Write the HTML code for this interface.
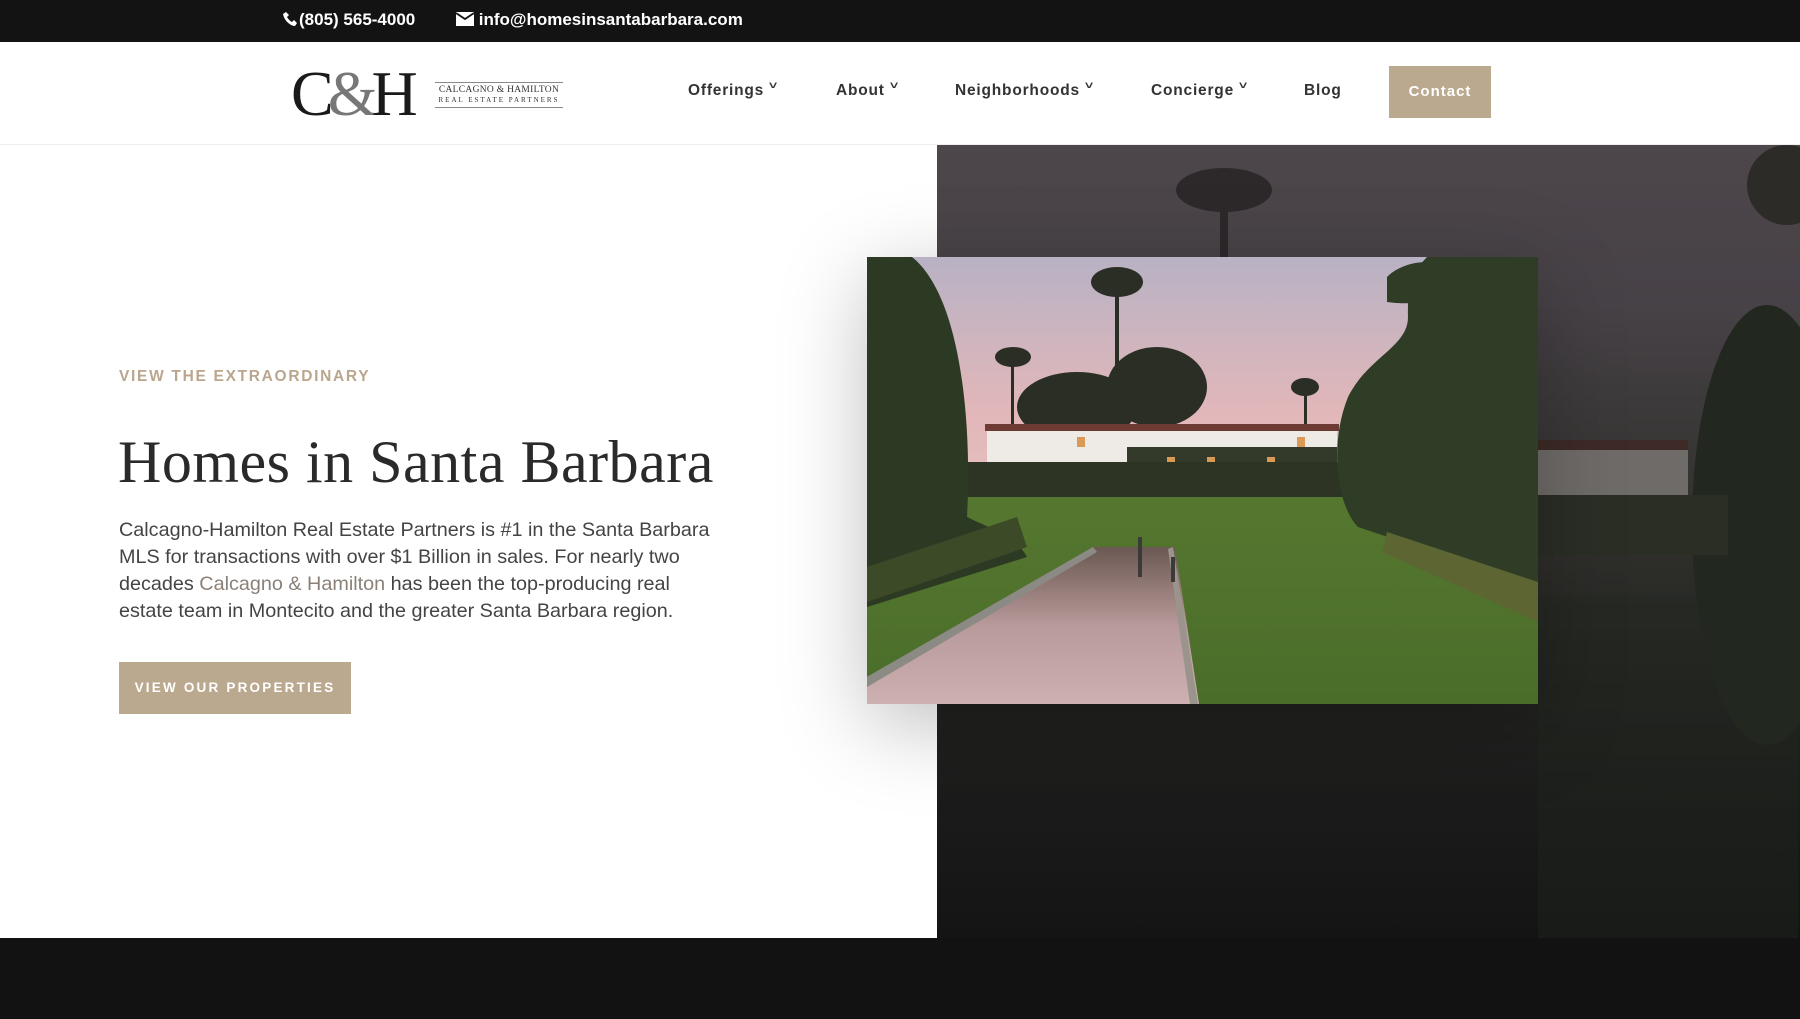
<!DOCTYPE html>
<html><head><meta charset="utf-8"><style>
*{margin:0;padding:0;box-sizing:border-box}
body{width:1800px;height:1019px;overflow:hidden;background:#fff;font-family:"Liberation Sans",sans-serif;position:relative}
.top{position:absolute;left:0;top:0;width:1800px;height:42px;background:#131313;color:#fff;font-weight:bold;font-size:17px}
.top span{position:absolute;top:10px}
.hdr{position:absolute;left:0;top:42px;width:1800px;height:103px;background:#fff;border-bottom:1px solid #eee}
.nav{position:absolute;top:40px;font-size:15.5px;font-weight:bold;color:#333;letter-spacing:.8px}
.nav i{font-style:normal;font-size:11px;position:relative;top:-6px;left:6px;display:inline-block;transform:scaleX(1.3)}
.contact{position:absolute;left:1389px;top:24px;width:102px;height:52px;background:#bba98f;color:#fff;font-size:15px;font-weight:bold;letter-spacing:1px;text-align:center;line-height:52px}
.left{position:absolute;left:0;top:145px;width:937px;height:793px;background:#fff}
.right{position:absolute;left:937px;top:145px;width:863px;height:793px;background:linear-gradient(180deg,#4d464b 0%,#474247 20%,#33322f 45%,#242522 65%,#1a1a1a 85%,#141414 100%)}
.bottom{position:absolute;left:0;top:938px;width:1800px;height:81px;background:#121212}
.eyebrow{position:absolute;left:119px;top:368px;font-size:15.5px;font-weight:bold;letter-spacing:1.7px;color:#b9a68d}
h1{position:absolute;left:118px;top:428px;font-family:"Liberation Serif",serif;font-weight:normal;font-size:60px;color:#2a2a2a;letter-spacing:.5px;white-space:nowrap}
p{position:absolute;left:119px;top:517px;font-size:19.8px;line-height:27px;color:#444;white-space:nowrap}
p b{font-weight:normal;color:#8a8078}
.btn{position:absolute;left:119px;top:662px;width:232px;height:52px;background:#bba98f;color:#fff;font-size:13.5px;font-weight:bold;letter-spacing:2.2px;text-align:center;line-height:52px}
.photo{position:absolute;left:867px;top:257px;width:671px;height:447px;box-shadow:0 20px 80px rgba(0,0,0,.25)}
</style></head><body>
<div class="top">
<span style="left:283px"><svg width="16" height="16" viewBox="0 0 16 16" style="vertical-align:-2px"><path d="M3 1l3 3-2 2c1 2 3 4 5 5l2-2 3 3-2 3C7 15 1 9 0 3z" fill="#fff"/></svg>(805) 565-4000</span>
<span style="left:456px"><svg width="18" height="14" viewBox="0 0 18 14" style="vertical-align:-1px"><rect x="0" y="0" width="18" height="14" fill="#fff"/><path d="M0 1l9 6 9-6" stroke="#131313" stroke-width="1.8" fill="none"/></svg> info@homesinsantabarbara.com</span>
</div>
<div class="hdr">
<div style="position:absolute;left:291px;top:22px;font-family:'Liberation Serif',serif;font-size:64px;line-height:60px;color:#1a1a1a;letter-spacing:-6px">C<span style="color:#777">&amp;</span>H</div>
<div style="position:absolute;left:435px;top:40px;width:128px;border-top:1px solid #888;border-bottom:1px solid #888;padding:2px 0;font-family:'Liberation Serif',serif;font-size:9.5px;line-height:10px;color:#333;text-align:center;letter-spacing:.3px">CALCAGNO &amp; HAMILTON<br><span style="font-size:7px;letter-spacing:2px">REAL ESTATE PARTNERS</span></div>
<div class="nav" style="left:688px">Offerings<i>˅</i></div>
<div class="nav" style="left:836px">About<i>˅</i></div>
<div class="nav" style="left:955px">Neighborhoods<i>˅</i></div>
<div class="nav" style="left:1151px">Concierge<i>˅</i></div>
<div class="nav" style="left:1304px">Blog</div>
<div class="contact">Contact</div>
</div>
<div class="left"></div>
<div class="right">
<svg width="863" height="793" viewBox="0 0 863 793">
<g fill="#2a2627" opacity=".9"><rect x="283" y="40" width="8" height="80"/><ellipse cx="287" cy="45" rx="48" ry="22"/></g>
<ellipse cx="850" cy="40" rx="40" ry="40" fill="#2c2b28"/>
<ellipse cx="830" cy="380" rx="75" ry="220" fill="#222820"/>
<rect x="601" y="305" width="150" height="45" fill="#6f6b69"/>
<rect x="601" y="295" width="150" height="10" fill="#3e2a26"/>
<rect x="601" y="350" width="190" height="60" fill="#2a2e25"/>
<rect x="601" y="450" width="260" height="343" fill="#232720" opacity=".35"/>
</svg>
</div>
<div class="eyebrow">VIEW THE EXTRAORDINARY</div>
<h1>Homes in Santa Barbara</h1>
<p>Calcagno-Hamilton Real Estate Partners is #1 in the Santa Barbara<br>MLS for transactions with over $1 Billion in sales. For nearly two<br>decades <b>Calcagno &amp; Hamilton</b> has been the top-producing real<br>estate team in Montecito and the greater Santa Barbara region.</p>
<div class="btn">VIEW OUR PROPERTIES</div>
<svg class="photo" viewBox="0 0 671 447" preserveAspectRatio="none">
<defs>
<linearGradient id="sky" x1="0" y1="0" x2="0" y2="1"><stop offset="0" stop-color="#b8b2c4"/><stop offset=".35" stop-color="#e2b7b9"/><stop offset=".7" stop-color="#e8c8c6"/><stop offset="1" stop-color="#d8d0d2"/></linearGradient>
<linearGradient id="lawn" x1="0" y1="0" x2="0" y2="1"><stop offset="0" stop-color="#55772f"/><stop offset="1" stop-color="#4a6d2a"/></linearGradient>
<linearGradient id="pool" x1="0" y1="0" x2="0" y2="1"><stop offset="0" stop-color="#6b5852"/><stop offset=".5" stop-color="#b89a9a"/><stop offset="1" stop-color="#cdb0b0"/></linearGradient>
</defs>
<rect width="671" height="447" fill="url(#sky)"/>
<g fill="#2b2e24">
<rect x="248" y="20" width="4" height="200"/><ellipse cx="250" cy="25" rx="26" ry="15"/>
<rect x="144" y="100" width="3" height="110"/><ellipse cx="146" cy="100" rx="18" ry="10"/>
<rect x="437" y="130" width="3" height="60"/><ellipse cx="438" cy="130" rx="14" ry="9"/>
<ellipse cx="210" cy="150" rx="60" ry="35"/><ellipse cx="290" cy="130" rx="50" ry="40"/>
</g>
<rect x="120" y="172" width="350" height="45" fill="#eeeae6"/>
<rect x="118" y="167" width="354" height="7" fill="#6e3a34"/>
<rect x="260" y="190" width="210" height="35" fill="#333a2a"/>
<g fill="#d89a55"><rect x="300" y="200" width="8" height="12"/><rect x="340" y="200" width="8" height="12"/><rect x="210" y="180" width="8" height="10"/><rect x="430" y="180" width="8" height="10"/><rect x="400" y="200" width="8" height="12"/></g>
<rect x="80" y="205" width="500" height="40" fill="#2e3424"/>
<rect x="0" y="240" width="671" height="207" fill="url(#lawn)"/>
<path d="M0 0h45c50 40 60 170 55 260 20 10 50 20 60 40L0 350z" fill="#2c3a24"/>
<path d="M0 310l150-50 10 30L0 345z" fill="#3d4a28"/>
<path d="M560 0h111v330l-180-60c-20-20-30-80-10-130 20-40 60-50 60-80 0-30 0-40 19-60z" fill="#2f3d26"/>
<path d="M520 20c20-20 60-20 80 0-10 20-40 30-80 25z" fill="#2f3d26"/>
<path d="M520 275l151 50v40L515 295z" fill="#5d6633"/>
<path d="M226 290h82l24 157H0V420z" fill="url(#pool)"/>
<path d="M226 290l-226 130v10l230-135z" fill="#8c8a84"/>
<path d="M306 290l25 157h-8l-22-155z" fill="#9a948c"/>
<g fill="#3a3a36"><rect x="271" y="280" width="4" height="40"/><rect x="304" y="300" width="4" height="25"/></g>
</svg>
<div class="bottom"></div>
</body></html>
